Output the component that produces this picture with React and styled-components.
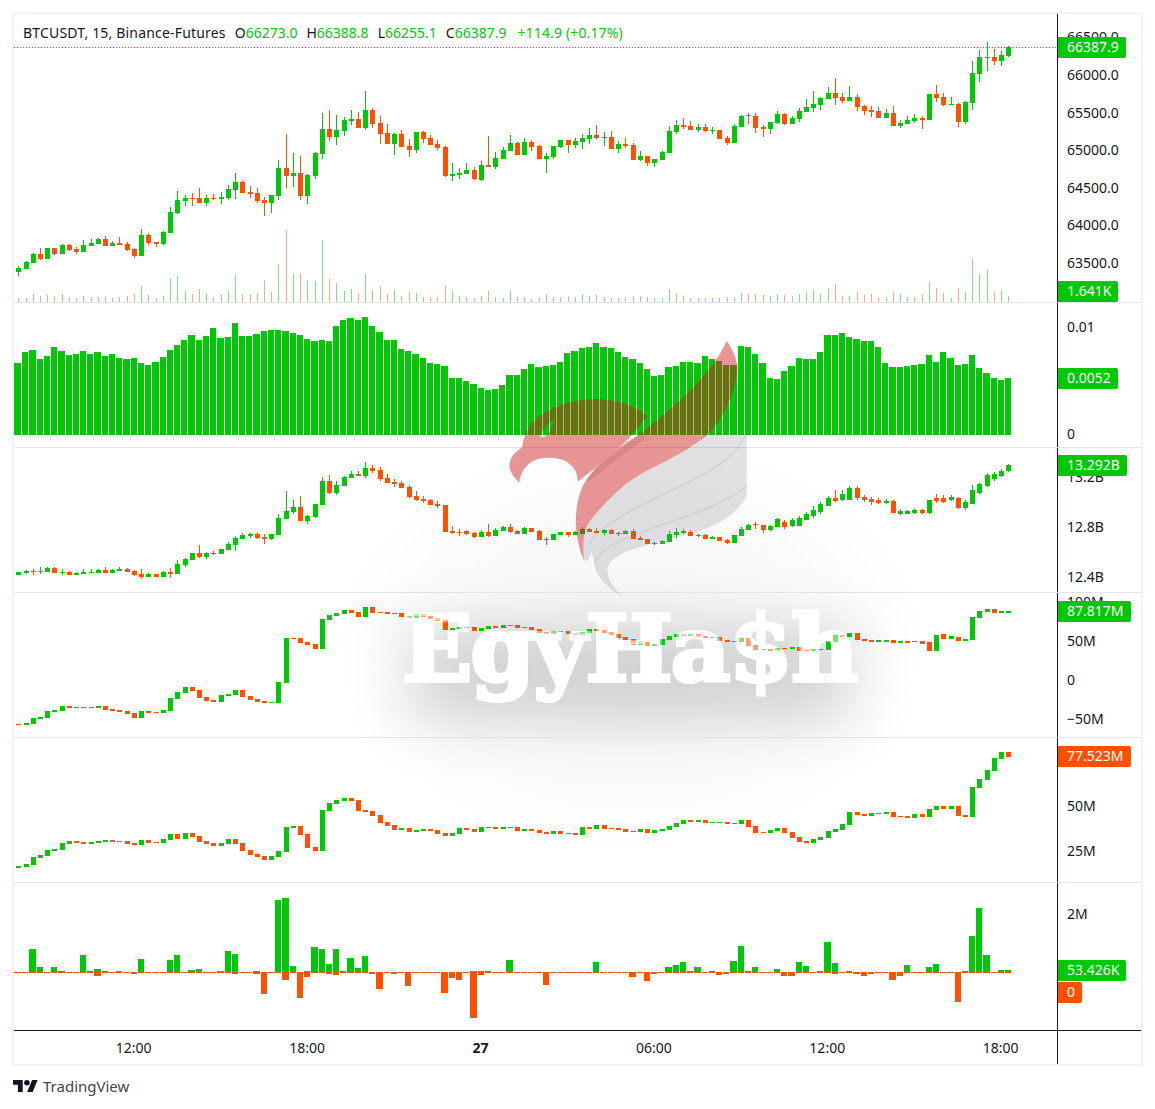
import React from "react";
import styled, { createGlobalStyle } from "styled-components";

const GREEN = "#00c805";
const RED = "#ff5000";
const FONT = `"Noto Sans", "Open Sans", sans-serif`;

/* Traced chart series: colour,bodyTop,bodyBottom,wickHigh,wickLow (in 3x pixels, per bar). */
const parse = (str, base = 0, scale = 3) =>
  str.trim().split(/\s+/).map((tok) => {
    const p = tok.split(",");
    const nums = p.slice(1).map((v) => base + Number(v) / scale);
    return { up: p[0] === "g", t: nums[0], b: nums[1], h: nums[2] ?? nums[0], l: nums[3] ?? nums[1] };
  });

const MAIN = parse(`
g,804,816,798,828 g,786,807,784,807 g,762,789,759,789 r,762,777,744,780 g,744,777,744,777 r,744,762,744,765
g,735,762,732,762 r,735,750,732,753 r,747,756,741,762 g,735,756,720,756 g,729,738,717,738 g,717,732,714,732
r,717,738,708,738 g,729,738,723,738 r,729,735,711,735 r,732,750,726,753 r,747,768,744,774 g,705,768,687,768
r,705,729,699,735 r,726,732,726,741 g,696,732,693,735 g,636,699,621,699 g,600,639,573,642 g,594,603,585,618
r,594,597,579,618 r,594,609,564,609 g,594,609,585,618 r,594,597,582,600 g,591,597,576,612 g,567,594,555,600
g,546,570,519,597 r,546,579,543,579 r,576,582,558,594 r,579,603,564,609 r,600,609,591,648 g,585,609,585,639
g,504,588,480,600 r,504,528,402,564 g,519,528,459,561 r,519,588,468,600 g,525,588,522,612 g,459,528,456,537
g,387,462,339,477 r,387,411,330,423 g,390,411,345,435 g,360,393,351,408 g,357,363,330,375 r,357,384,336,384
g,330,384,273,390 r,330,372,324,384 r,369,402,348,432 r,399,432,372,432 g,402,432,399,465 r,402,441,390,441
r,438,450,417,471 g,396,450,396,459 r,396,417,393,429 r,414,435,405,435 r,432,444,420,450 r,441,528,438,531
g,522,528,489,543 g,519,525,504,537 g,510,522,489,522 r,510,537,501,540 g,495,540,483,543 r,495,501,408,501
g,474,501,456,507 g,450,477,441,477 g,429,453,405,453 r,429,465,426,465 g,426,465,414,465 r,426,441,420,453
r,438,477,435,477 g,468,477,459,519 g,438,471,438,477 g,420,441,420,444 r,420,435,420,459 g,423,435,414,444
g,414,426,402,447 g,405,417,384,432 r,405,414,375,417 g,411,414,396,438 r,411,447,393,447 g,432,447,423,459
r,432,438,414,444 r,435,480,429,480 g,468,480,453,483 r,468,489,468,498 g,477,489,477,501 g,456,480,453,480
g,393,459,378,459 g,375,396,360,402 r,375,381,354,387 r,378,390,363,390 g,381,390,372,396 r,381,393,372,396
g,390,393,381,402 r,390,417,390,417 r,414,429,408,435 g,378,429,372,429 g,348,381,345,381 r,345,348,339,372
r,348,384,339,399 r,381,387,375,411 g,366,387,366,402 g,342,369,333,372 r,342,372,339,375 g,354,372,348,372
g,333,357,324,366 g,321,336,297,336 g,312,324,273,336 g,294,315,291,330 g,279,297,261,297 r,279,294,234,315
r,291,303,279,309 g,291,303,258,303 r,291,321,282,333 r,318,333,315,345 r,330,336,318,351 r,333,354,321,354
g,339,354,327,354 r,339,378,318,378 g,369,378,360,384 g,360,372,348,372 g,354,363,342,369 r,354,360,348,387
g,282,360,282,360 r,282,294,255,306 r,291,315,279,318 g,312,315,291,315 r,312,366,309,381 g,306,366,303,372
g,219,309,183,330 g,171,222,150,246 g,171,174,126,213 r,171,183,147,195 g,165,183,153,198 g,141,168,138,171`);

const VOLUME = `894 894 882 888 885 888 882 891 894 888 891 891 888 894 891 888 882 858 885 894 888 837 828 873 882 867 879 891 885 873
825 882 885 879 840 876 792 690 822 819 840 843 720 837 849 873 867 879 822 870 858 882 870 888 876 879 891 891 891 858
873 888 891 894 888 873 891 894 873 891 891 897 891 882 891 891 888 891 885 888 885 891 894 894 891 888 888 891 894 894
867 879 888 894 894 894 894 894 891 891 879 882 882 885 888 885 885 888 882 876 870 882 864 852 888 888 876 885 882 891
891 876 882 891 891 882 846 864 879 894 864 876 777 822 807 876 870 888`.trim().split(/\s+/).map(Number);

const DELTA_TOPS = `363 352 350 359 356 347 351 355 354 351 354 352 356 354 358 359 358 363 365 362 357 350 345 340 335 340 336 328 338 337
323 336 336 334 331 330 330 331 333 335 339 341 340 341 326 320 318 320 317 326 332 340 340 349 351 354 358 363 364 366
378 378 381 384 388 390 389 385 375 375 369 364 367 366 365 362 353 351 348 347 343 347 348 352 357 359 363 369 376 375
367 366 362 362 363 356 359 361 365 365 346 347 354 363 378 379 371 366 358 359 359 352 335 335 333 337 339 341 341 347
363 367 367 366 365 364 355 362 352 358 365 364 355 368 373 378 380 378`.trim().split(/\s+/).map(Number);

const PANE3 = [
  ...parse(`
g,396,405 g,393,399,390,402 r,393,396,387,405 g,393,396,381,402 g,384,396,381,396 r,384,399,381,399 g,396,399,387,405
r,396,405,393,405 g,399,405,396,405 g,396,402,387,402 g,396,399,387,399 g,390,399,387,399 r,390,399,381,399 g,390,399,387,399
g,387,393,381,393 r,387,396,384,396 r,393,405,390,408 r,402,411,387,417 g,402,411,399,411 r,402,411,402,411 g,396,411,393,411
r,396,402,384,414 g,372,402,360,402 g,357,375,354,381 g,339,360,339,360 r,339,351,315,354 g,339,351,336,357 g,339,342,333,345
g,327,342,327,342 g,312,330,306,330 g,294,315,288,333 g,285,297,279,297 g,282,288,279,294 r,282,294,276,297 r,291,297,282,312
g,282,297,282,300 g,234,285,222,285 g,213,237,153,237 g,201,216,180,222 r,201,243,168,243 g,228,243,225,252 g,192,231,192,234
g,123,195,111,195 r,123,159,105,162 g,135,159,123,165 g,111,138,108,138 g,102,114,93,114 r,102,108,93,108 g,84,108,66,114
r,84,93,75,99 r,90,117,81,123 r,114,129,102,129 r,126,132,117,141 r,129,144,123,144 r,141,171,135,174 r,168,180,153,183
r,177,183,168,189 r,180,195,177,195 r,192,198,183,204 r,195,276,195,276 r,273,279,258,282 r,276,279,267,288 r,273,282,270,285
r,279,291,276,294`, 440),
  ...parse(`
g,606,621,600,621 r,606,618,582,621 g,600,618,594,618 g,591,603,588,603 r,591,606,582,609 r,603,612,600,612 g,594,612,591,612
r,594,606,594,606 r,603,630,600,630 r,627,630,621,645 g,612,630,612,630 g,606,615,606,615 r,606,615,606,621 g,606,615,603,615
g,597,612,591,612 r,597,606,594,606 r,603,609,594,609 g,600,609,597,615 r,600,612,597,612 g,609,612,606,618 g,603,612,600,612
r,603,627,597,627 r,624,630,618,630 r,627,642,627,642 g,639,642,636,645 g,633,642,630,642 g,612,636,603,636 g,606,615,594,624
g,603,609,597,612 r,606,618,600,618 g,615,618,612,621 r,615,627,612,627 g,621,627,618,627 r,621,633,621,633 r,630,639,627,642
g,615,639,615,639 g,597,618,591,618 g,585,600,582,600 r,582,585,576,597 r,585,600,585,609 g,588,600,585,603 g,567,591,564,591`, 330),
  ...parse(`
r,522,527,520,529 g,520,526,518,527 g,518,526,516,526 g,514,520,512,520 g,510,516,506,518 g,504,512,502,514 g,498,506,496,506
r,498,501,490,502 g,494,500,490,501 g,488,500,486,500 r,488,498,486,500 r,497,500,495,502 r,499,502,497,505 r,500,503,498,504
g,501,503,499,504 r,501,513,500,513 g,511,514,509,515 g,511,514,510,514 g,510,513,509,514 r,510,513,509,514 g,500,513,500,514
r,498,501,494,503 r,498,502,495,503 g,497,500,495,501 r,498,508,497,509 g,502,508,500,510 g,490,504,485,504 g,484,493,483,494
g,475,486,473,487 g,474,479,472,481 g,471,476,469,477 g,465,471,464,472`, 0, 1),
];

const PANE4 = [
  ...parse(`
r,852,855 g,849,855 g,834,852 g,831,837 g,813,834 g,810,816 g,798,813 r,798,804 r,801,804 g,801,804 r,801,804 g,798,804
r,798,810 r,807,813 r,810,816 r,813,822 r,819,834 g,813,834 r,813,819 r,816,819 g,810,819 g,774,813 g,756,777 g,741,759
r,741,753 r,750,774 r,771,783 r,780,786 g,765,786 g,762,768 g,750,765 r,750,771 r,768,780 r,777,786 r,783,789 g,786,789
g,726,789 g,594,729 r,594,597 r,594,609 r,606,615 r,612,627 g,537,627 g,525,540 g,519,528 g,510,522 r,510,519 r,516,531
g,501,531 r,501,519 r,516,519 r,516,522 g,519,522 r,519,531 r,528,534 g,522,534 r,522,531 r,528,537 r,534,543 r,540,570
g,564,570 g,561,567 r,561,564 r,561,573 g,564,573 g,558,567 r,558,564`, 440),
  ...parse(`
g,105,114 g,105,107 r,105,114 g,111,114 r,111,120 r,117,129 r,126,132 g,123,132 r,123,126 r,123,132 r,129,135 g,126,135
g,117,129 r,117,123 r,120,129 r,126,135 r,132,144 r,141,150 r,147,165 g,156,165 r,156,168 g,162,168 g,147,165 g,138,150
g,132,141 r,132,138 g,132,138 r,132,141 r,138,144 r,141,144 r,141,153 r,150,156 r,153,156 g,144,156 r,144,168 r,165,180
r,177,180 r,177,183 g,174,183 r,174,177 g,171,177 r,171,183 r,180,183 g,177,183 r,177,180 g,153,180 g,135,156 r,135,141
g,129,141 r,129,150 r,147,153 r,150,156 g,150,156`, 590),
  ...parse(`
g,640,642 r,640,643 g,641,643 r,641,643 g,641,642 r,641,644 r,642,651 g,635,651 r,634,639 g,636,639 r,637,641 g,639,641
g,617,640 g,611,618 g,609,612 r,609,613 g,611,613 g,611,613`, 0, 1),
];

const PANE5 = parse(`
g,378,384 g,372,381 g,351,375 g,345,354 g,330,348 g,327,333 g,309,330 g,303,312 r,303,309 r,306,312 g,306,312 g,303,309
g,300,306 r,300,306 g,303,306 r,303,312 r,309,315 g,300,315 r,300,309 r,306,309 g,297,309 g,282,300 r,282,297 g,279,297
r,279,291 r,288,306 r,303,312 r,309,318 g,309,318 g,297,312 r,297,312 r,309,333 r,330,345 r,342,351 r,348,360 g,348,360
g,333,351 g,261,336 g,258,264 r,258,285 r,282,324 r,321,333 g,210,333 g,189,213 g,180,192 g,174,183 r,174,183 r,180,213
r,210,216 r,213,228 r,225,249 r,246,258 r,255,270 g,264,270 r,264,276 g,270,276 g,267,273 r,267,273 r,270,282 r,279,288
g,279,288 g,264,282 r,264,270 r,267,276 g,261,276 r,261,264 r,261,267
g,261,267 r,261,264 r,261,273 g,267,273 r,267,273 r,270,279 r,276,282 g,273,282 r,273,282 r,279,282 r,279,285 g,261,285
r,261,267 g,255,267 r,255,267 r,264,267 r,264,270 r,267,276 g,273,276 g,267,276 r,267,279 g,270,279 g,267,273 g,258,270
g,249,261 g,240,252 r,240,246 g,240,246 r,240,249 g,246,249 g,246,249 r,246,252 g,249,252 g,240,252 r,240,261 r,258,279
r,276,279 g,270,279 g,264,273 r,264,279 r,276,294 r,291,306 r,303,309 g,297,309 g,291,300 g,273,294 g,267,276 g,252,270
g,216,255 r,216,225 r,222,228 g,219,228 r,219,222 g,216,222 r,216,231 r,228,231 r,228,234 g,222,234 r,222,231 g,207,231
g,198,210 r,198,207 g,198,207 r,198,228 r,225,231 g,141,231 g,117,144 g,90,120 g,54,93 g,36,57 r,36,51`, 740);

const HIST = `. . g207 g261 . g261 g273 . . g225 g273 g267r288 g273 . g273 . r282 g237 . . . g240 g225 . g270 g267 . . g273 g213
g222r282 . . g273r282 r342 . g60 g54r300 g258 r354 g273r291 g201 g207 g252r282 g207r285 g273 g234 g264 g228 r282 r327 . r282 . r318 . . . . r339
r294 r300 . g273r414 g273r285 g273 . . g240 . . . . r315 . . . . . . g246 . . . . r291 . r303 r282 .
g261 g255 g246 g273 g261 . g273 r285 r282 g243 g198 g273 g261 . . g267 r288 r288 g246 g258 . g273 g186 g249r282 . g273 r282 r288 r282 .
. r300 r288 g255 . . g261 g252 . . r366 g273 g168 g84 g225 . g270 g270`.trim().split(/\s+/).map((tok) => {
  const g = tok.match(/g(\d+)/);
  const r = tok.match(/r(\d+)/);
  return { g: g ? 880 + Number(g[1]) / 3 : null, r: r ? 880 + Number(r[1]) / 3 : 973 };
});

const barX = (i) => 18.3 + 7.227 * i;
const center = (i) => Math.round(barX(i));
const barLeft = (i) => Math.round(barX(i) - 3.3);

const GlobalStyle = createGlobalStyle`
  html, body { margin: 0; padding: 0; background: #fff; height: 1109px; overflow: hidden; }
  body { font-family: ${FONT}; color: #131722; }
`;

const Page = styled.div`
  padding: 12px 0 0 12px;
`;
const Frame = styled.div`
  position: relative;
  box-sizing: border-box;
  width: 1131px;
  height: 1054px;
  border: 2px solid #f0f3fa;
  display: flex;
  flex-direction: column;
`;
const Pane = styled.div`
  position: relative;
  z-index: 1;
  display: flex;
  box-sizing: border-box;
  height: ${(p) => p.$height}px;
  flex: none;
  border-bottom: 1px solid ${(p) => p.$line || "#e0e3eb"};
`;
const Plot = styled.div`
  position: relative;
  flex: 1;
  min-width: 0;
  overflow: hidden;
`;
const PlotSvg = styled.svg`
  display: block;
  width: 1043px;
  height: 100%;
  shape-rendering: crispEdges;
`;
const PriceAxis = styled.div`
  position: relative;
  flex: none;
  box-sizing: border-box;
  width: 84px;
  border-left: 1px solid #131722;
`;
/* Ticks of a scale are evenly spaced: a column of equal cells, each holding one centred label. */
const TickColumn = styled.div`
  display: flex;
  flex-direction: column;
  margin-top: ${(p) => p.$offset}px;
  padding-left: 9px;
`;
const Tick = styled.span`
  display: flex;
  align-items: center;
  flex: none;
  height: ${(p) => p.$step}px;
  font-size: 14px;
  color: #131722;
  white-space: nowrap;
`;
const Badge = styled.span`
  position: absolute;
  left: 0;
  top: ${(p) => p.$top}px;
  box-sizing: border-box;
  height: 21px;
  padding: 0 7px 0 9px;
  line-height: 20px;
  font-size: 14px;
  color: #fff;
  background: ${(p) => (p.$down ? RED : GREEN)};
  border-radius: 0 2px 2px 0;
  white-space: nowrap;
`;
const Legend = styled.div`
  position: absolute;
  left: 9px;
  top: 8px;
  display: flex;
  align-items: center;
  height: 20px;
  font-size: 14px;
  color: #131722;
  white-space: nowrap;
`;
const LegendTitle = styled.span`
  margin-right: 9px;
  letter-spacing: 0.18px;
`;
const LegendValue = styled.span`
  margin-right: ${(p) => p.$gap || 9}px;
  color: ${GREEN};
`;
const LegendChange = styled.span`
  color: ${GREEN};
  letter-spacing: 0.15px;
`;
const LegendKey = styled.span`
  color: #131722;
`;
const TimeRow = styled.div`
  position: relative;
  z-index: 1;
  flex: 1;
  display: flex;
`;
const TimeTrack = styled.div`
  flex: 0 0 1043px;
  min-width: 0;
  box-sizing: border-box;
  display: flex;
  padding: 8px 0 0 33px;
  white-space: nowrap;
`;
const TimeLabel = styled.span`
  flex: 0 0 173.4px;
  text-align: center;
  font-size: 14px;
  line-height: 18px;
  font-weight: ${(p) => (p.$bold ? 700 : 400)};
  color: #131722;
`;
const HaloWide = styled.div`
  position: absolute;
  z-index: 0;
  left: 316px;
  top: 420px;
  width: 600px;
  height: 420px;
  background: radial-gradient(ellipse closest-side, rgba(0, 0, 0, 0.04), rgba(0, 0, 0, 0.02) 60%, rgba(0, 0, 0, 0));
`;
const HaloCore = styled.div`
  position: absolute;
  z-index: 0;
  left: 396px;
  top: 612px;
  width: 440px;
  height: 96px;
  background: rgba(0, 0, 0, 0.15);
  filter: blur(28px);
`;
const WatermarkText = styled.div`
  position: absolute;
  left: 388px;
  top: 581px;
  font-family: "DejaVu Serif", "Liberation Serif", serif;
  font-weight: 700;
  font-size: 92px;
  line-height: 108px;
  letter-spacing: -1.5px;
  white-space: nowrap;
  z-index: ${(p) => (p.$front ? 2 : 0)};
  color: ${(p) => (p.$front ? "rgba(255,255,255,0.45)" : "#fff")};
  -webkit-text-stroke: 4px ${(p) => (p.$front ? "rgba(255,255,255,0.45)" : "#fff")};
  text-shadow: ${(p) => (p.$front ? "none" : "0 0 3px rgba(0,0,0,0.22)")};
  pointer-events: none;
`;
const Eagle = styled.svg`
  position: absolute;
  z-index: 2;
  left: 466px;
  top: 316px;
  width: 300px;
  height: 280px;
  pointer-events: none;
`;
const Footer = styled.div`
  display: flex;
  align-items: center;
  gap: 5px;
  height: 16px;
  margin: 12px 0 0 1px;
  font-size: 15px;
  line-height: 16px;
  color: #3f4450;
`;
const LogoMark = styled.svg`
  width: 25px;
  height: 12.5px;
  flex: none;
`;

const Candles = ({ data, wicks = true }) => (
  <g>
    {data.map((c, i) => {
      const col = c.up ? GREEN : RED;
      const cx = center(i);
      const top = Math.round(c.t);
      const bottom = Math.max(top + 1, Math.round(c.b));
      return (
        <g key={i} fill={col}>
          {wicks && <rect x={cx} y={Math.round(c.h)} width={1} height={Math.max(1, Math.round(c.l) - Math.round(c.h))} />}
          <rect x={cx - 2} y={top} width={5} height={bottom - top} />
        </g>
      );
    })}
  </g>
);

const PaneChart = ({ top, height, children }) => (
  <PlotSvg viewBox={`14 ${top} 1043 ${height}`} preserveAspectRatio="none">
    {children}
  </PlotSvg>
);

const Scale = ({ offset, step, labels }) => (
  <TickColumn $offset={offset}>
    {labels.map((t) => (
      <Tick key={t} $step={step}>{t}</Tick>
    ))}
  </TickColumn>
);

const tradingLegend = [
  ["O", "66273.0"],
  ["H", "66388.8"],
  ["L", "66255.1"],
  ["C", "66387.9", 11],
];

const EagleMark = () => (
  <Eagle viewBox="0 0 900 840">
    <path
      fill="rgb(110,110,122)"
      opacity="0.2"
      d="M690 298 L800 312 L800 500 C770 550 720 585 650 605 C580 625 510 640 470 655 C420 670 385 690 382 720 C382 750 405 780 432 802 C390 780 345 740 343 700 L335 665 L325 690 L312 692 C306 630 312 590 340 560 C370 525 420 470 470 440 C530 405 600 375 640 345 C660 330 675 320 690 298 Z M485 310 L500 322 L400 395 L345 440 L322 455 L345 415 Z"
    />
    <g fill="none" stroke="rgb(100,100,110)" strokeOpacity="0.13" strokeWidth="4">
      <path d="M330 640 C338 610 420 550 600 470 C680 430 760 390 795 320" />
      <path d="M345 700 C360 640 480 610 600 565 C690 535 760 500 800 470" />
    </g>
    <g fill="rgb(207,27,29)" opacity="0.46">
      <path
        fillRule="evenodd"
        d="M502 258 C460 222 400 205 340 207 C270 208 195 235 155 280 C135 305 128 335 127 352 C105 365 88 385 88 408 C90 430 105 445 118 458 C120 430 140 395 175 387 C215 378 265 385 285 420 C291 432 293 445 293 455 C330 425 370 395 405 365 C440 335 470 300 502 258 Z M225 262 C205 280 190 300 178 318 L190 322 L205 312 C212 298 220 280 225 262 Z"
      />
      <path d="M740 33 C715 90 660 155 600 210 C550 255 510 290 470 318 C420 350 370 385 325 440 C295 480 285 540 288 590 C292 630 300 665 312 692 C306 630 312 590 340 560 C370 525 420 470 470 440 C530 405 600 375 640 345 C665 328 680 320 695 300 C735 255 770 180 772 110 C770 80 755 55 740 33 Z" />
    </g>
  </Eagle>
);

export default function App() {
  return (
    <Page>
      <GlobalStyle />
      <Frame>
        <HaloWide />
        <HaloCore />
        <WatermarkText>EgyHa$h</WatermarkText>

        <Pane $height={289}>
          <Plot>
            <PaneChart top={14} height={288}>
              {VOLUME.map((v, i) => (
                <rect key={i} x={center(i)} y={Math.round(v / 3)} width={1} height={302 - Math.round(v / 3)} fill={MAIN[i].up ? GREEN : RED} opacity="0.5" />
              ))}
              <line x1="14" x2="1057" y1="47.5" y2="47.5" stroke={GREEN} strokeWidth="1" strokeDasharray="1 2" />
              <Candles data={MAIN} />
            </PaneChart>
            <Legend>
              <LegendTitle>BTCUSDT, 15, Binance-Futures</LegendTitle>
              {tradingLegend.map(([k, v, gap]) => (
                <LegendValue key={k} $gap={gap}>
                  <LegendKey>{k}</LegendKey>
                  {v}
                </LegendValue>
              ))}
              <LegendChange>+114.9 (+0.17%)</LegendChange>
            </Legend>
          </Plot>
          <PriceAxis>
            <Scale offset={4.2} step={37.6} labels={["66500.0", "66000.0", "65500.0", "65000.0", "64500.0", "64000.0", "63500.0"]} />
            <Badge $top={23}>66387.9</Badge>
            <Badge $top={267}>1.641K</Badge>
          </PriceAxis>
        </Pane>

        <Pane $height={145}>
          <Plot>
            <PaneChart top={303} height={144}>
              {DELTA_TOPS.map((t, i) => {
                const left = i === 0 ? 14 : barLeft(i);
                return <rect key={i} x={left} y={t} width={barLeft(i + 1) - left - 1} height={435 - t} fill={GREEN} />;
              })}
            </PaneChart>
          </Plot>
          <PriceAxis>
            <Scale offset={-30.5} step={107} labels={["0.01", "0"]} />
            <Badge $top={65}>0.0052</Badge>
          </PriceAxis>
        </Pane>

        <Pane $height={145}>
          <Plot>
            <PaneChart top={448} height={144}>
              <Candles data={PANE3} />
            </PaneChart>
          </Plot>
          <PriceAxis>
            <Scale offset={3} step={50} labels={["13.2B", "12.8B", "12.4B"]} />
            <Badge $top={7}>13.292B</Badge>
          </PriceAxis>
        </Pane>

        <Pane $height={145}>
          <Plot>
            <PaneChart top={593} height={144}>
              <Candles data={PANE4} wicks={false} />
            </PaneChart>
          </Plot>
          <PriceAxis>
            <Scale offset={-11.65} step={39.3} labels={["100M", "50M", "0", "−50M"]} />
            <Badge $top={8}>87.817M</Badge>
          </PriceAxis>
        </Pane>

        <Pane $height={145}>
          <Plot>
            <PaneChart top={738} height={144}>
              <Candles data={PANE5} wicks={false} />
            </PaneChart>
          </Plot>
          <PriceAxis>
            <Scale offset={44.5} step={45} labels={["50M", "25M"]} />
            <Badge $down $top={8}>77.523M</Badge>
          </PriceAxis>
        </Pane>

        <Pane $height={148} $line="#131722">
          <Plot>
            <PaneChart top={883} height={147}>
              {HIST.map((b, i) => {
                const left = barLeft(i);
                const w = barLeft(i + 1) - left - 1;
                return (
                  <g key={i}>
                    {b.g !== null && <rect x={left} y={Math.round(b.g)} width={w} height={972 - Math.round(b.g)} fill={GREEN} />}
                    <rect x={left} y={972} width={w} height={Math.max(1, Math.round(b.r) - 972)} fill={RED} />
                  </g>
                );
              })}
              <rect x="14" y="972" width="7" height="1" fill={RED} />
            </PaneChart>
          </Plot>
          <PriceAxis>
            <Scale offset={21} step={18} labels={["2M"]} />
            <Badge $top={77}>53.426K</Badge>
            <Badge $down $top={99}>0</Badge>
          </PriceAxis>
        </Pane>

        <TimeRow>
          <TimeTrack>
            {[["12:00"], ["18:00"], ["27", true], ["06:00"], ["12:00"], ["18:00"]].map(([t, bold], i) => (
              <TimeLabel key={i} $bold={bold}>{t}</TimeLabel>
            ))}
          </TimeTrack>
          <PriceAxis />
        </TimeRow>

        <WatermarkText $front>EgyHa$h</WatermarkText>
        <EagleMark />
      </Frame>
      <Footer>
        <LogoMark viewBox="0 4 36 18" fill="#131722">
          <path d="M14 22H7V11H0V4h14v18zM28 22h-8l7.5-18h8L28 22z" />
          <circle cx="20" cy="8" r="4" />
        </LogoMark>
        TradingView
      </Footer>
    </Page>
  );
}
